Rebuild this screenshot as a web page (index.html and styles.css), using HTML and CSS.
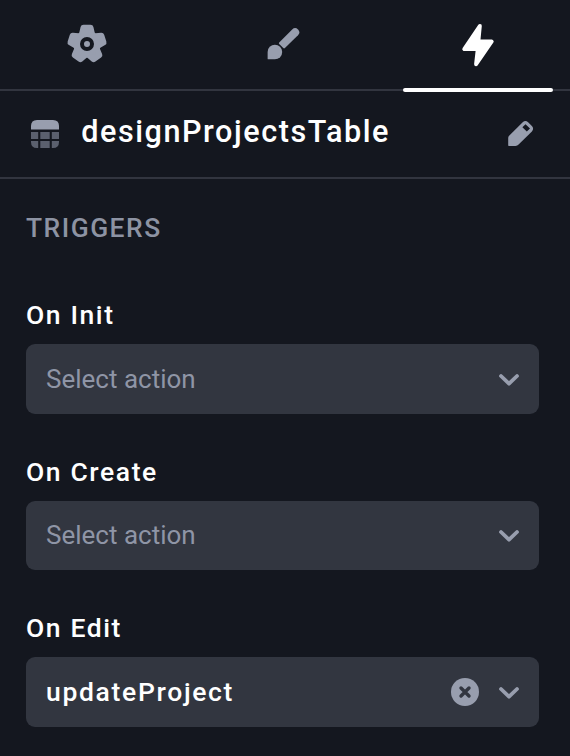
FILE: index.html
```html
<!DOCTYPE html>
<html lang="en">
<head>
<meta charset="utf-8">
<title>Triggers</title>
<link rel="stylesheet" href="styles.css">
</head>
<body>
<main class="panel">
  <nav class="tabs">
    <a class="tab" aria-label="Settings">
      <svg width="42" height="42" viewBox="-21 -21 42 42">
        <g fill="currentColor" stroke="currentColor" stroke-linejoin="round">
          <circle r="13.6" stroke="none"/>
          <g id="tooth"><path stroke-width="6" d="M-3.5-16.2 3.5-16.2 5.4-8-5.4-8Z"/></g>
          <use href="#tooth" transform="rotate(72)"/>
          <use href="#tooth" transform="rotate(144)"/>
          <use href="#tooth" transform="rotate(216)"/>
          <use href="#tooth" transform="rotate(288)"/>
        </g>
        <circle r="5" fill="#989eae" stroke="#14171f" stroke-width="4"/>
      </svg>
    </a>
    <a class="tab" aria-label="Style">
      <svg width="42" height="42" viewBox="0.6 -0.5 42 42" fill="currentColor">
        <path d="M17.8 19.1 30.8 5.9A4.1 4.1 0 0 1 36.6 11.7L23.5 24.6Q22.7 25.3 21.9 24.6L17.8 20.6Q17.1 19.9 17.8 19.1Z"/>
        <path d="M6.8 35.8Q6.2 35.8 6.2 35.2V28.5A7.3 7.3 0 1 1 13.5 35.8Z"/>
      </svg>
    </a>
    <a class="tab tab-active" aria-label="Triggers">
      <svg width="42" height="46" viewBox="0 0 42 46" fill="currentColor" stroke="currentColor" stroke-width="3.8" stroke-linejoin="round">
        <path d="M22.9 3.9 7.2 27.1H20.7L19 42.3 34.8 19.5H21.4Z"/>
      </svg>
    </a>
  </nav>
  <header class="component">
    <svg class="table-icon" width="28" height="28" viewBox="0 0 28 28">
      <path fill="#989eae" d="M0 9.5V6Q0 0 6 0H22Q28 0 28 6V9.5Z"/>
      <path fill="#5b606e" d="M0 12H7.2V19H0ZM9.3 12H18.7V19H9.3ZM20.8 12H28V19H20.8ZM0 21H7.2V28H6Q0 28 0 22ZM9.3 21H18.7V28H9.3ZM20.8 21H28V22Q28 28 22 28H20.8Z"/>
    </svg>
    <h1 class="component-name">designProjectsTable</h1>
    <svg class="edit-icon" width="26" height="26" viewBox="0 0.6 26 26">
      <path fill="#989eae" fill-rule="evenodd" d="M.8 25.5Q.2 25.5.2 24.8V17.5Q.2 16.3 1.1 15.4L14.7 1.8Q17.4-.5 20.1 1.8L23.9 5.6Q26.3 8.3 23.9 11L10.6 24.2Q9.4 25.5 7.5 25.5ZM17.5 3.8 14.4 6.9 18.8 11.2 22 8.1Z"/>
    </svg>
  </header>
  <section class="triggers">
    <h2 class="section-title">TRIGGERS</h2>
    <div class="trigger">
      <div class="label">On Init</div>
      <div class="select">
        <span class="placeholder">Select action</span>
        <svg class="chevron" width="20" height="12" viewBox="0 0 20 12"><path d="M2 2 10 9.7 18 2"/></svg>
      </div>
    </div>
    <div class="trigger">
      <div class="label">On Create</div>
      <div class="select">
        <span class="placeholder">Select action</span>
        <svg class="chevron" width="20" height="12" viewBox="0 0 20 12"><path d="M2 2 10 9.7 18 2"/></svg>
      </div>
    </div>
    <div class="trigger">
      <div class="label">On Edit</div>
      <div class="select">
        <span class="value">updateProject</span>
        <svg class="clear" width="28" height="28" viewBox="0 0 28 28">
          <circle cx="14" cy="14" r="14" fill="#989eae"/>
          <path d="M10 10 18 18M18 10 10 18" stroke="#323640" stroke-width="3.4" stroke-linecap="round"/>
        </svg>
        <svg class="chevron" width="20" height="12" viewBox="0 0 20 12"><path d="M2 2 10 9.7 18 2"/></svg>
      </div>
    </div>
  </section>
</main>
</body>
</html>
```
FILE: styles.css
```css
* { box-sizing: border-box; }
body {
  margin: 0;
  background: #14171f;
  color: #fff;
  font-family: Roboto, "Liberation Sans", sans-serif;
}
svg { display: block; flex: none; overflow: visible; }
.panel { height: 756px; overflow: hidden; }
.tabs {
  display: flex;
  justify-content: space-between;
  height: 91px;
  padding: 0 17px 0 12px;
  border-bottom: 2px solid #32353f;
}
.tab {
  position: relative;
  display: flex;
  align-items: center;
  justify-content: center;
  width: 150px;
  height: 88px;
  color: #989eae;
}
.tab-active { height: 89px; color: #fff; }
.tab-active::after {
  content: "";
  position: absolute;
  left: 0;
  right: 0;
  bottom: -3px;
  height: 4px;
  border-radius: 2px;
  background: #fff;
}
.component {
  display: flex;
  align-items: center;
  height: 88px;
  padding: 0 36px 0 31.4px;
  border-bottom: 2px solid #32353f;
}
.component-name {
  flex: 1;
  margin: 0 0 4px 21.8px;
  font-size: 30.6px;
  line-height: 36px;
  font-weight: 500;
  letter-spacing: 1.55px;
}
.triggers { padding: 34px 31px 0 26px; }
.section-title {
  margin: 0 0 57px;
  font-size: 26.4px;
  line-height: 30px;
  font-weight: 500;
  letter-spacing: 1.5px;
  color: #8d93a3;
}
.trigger { margin-bottom: 43px; }
.label {
  margin-bottom: 14px;
  font-size: 26.5px;
  line-height: 30px;
  font-weight: 500;
  letter-spacing: 1.6px;
}
.select {
  display: flex;
  align-items: center;
  height: 69.5px;
  padding: 0 20px;
  border-radius: 9px;
  background: #323640;
  font-size: 26px;
  line-height: 30px;
}
.placeholder { flex: 1; color: #8f95a6; }
.value { flex: 1; font-size: 26.5px; font-weight: 500; letter-spacing: 1.67px; }
.clear { margin: 1px 19.6px 0 0; }
.chevron {
  margin-top: 2px;
  fill: none;
  stroke: #989eae;
  stroke-width: 3.8;
  stroke-linecap: round;
  stroke-linejoin: round;
}
```
